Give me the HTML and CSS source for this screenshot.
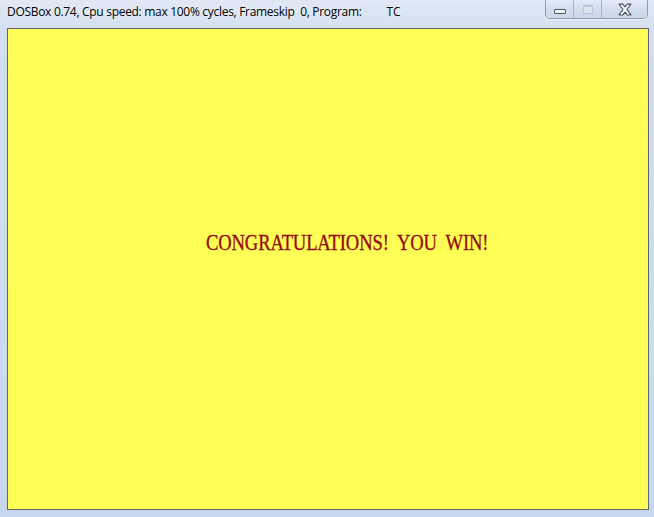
FILE: index.html
```html
<!DOCTYPE html>
<html>
<head>
<meta charset="utf-8">
<link rel="stylesheet" href="styles.css">
</head>
<body>
<div class="window">
  <div class="titlebar">
    <div class="title"><span class="t1">DOSBox 0.74, Cpu speed: max 100% cycles, Frameskip&nbsp; 0, Program:</span><span class="t2">TC</span></div>
    <div class="caption">
      <div class="btn min"><span class="min-bar"></span></div>
      <div class="btn max"><span class="max-box"></span></div>
      <div class="btn close">
        <svg width="14" height="12" viewBox="0 0 14 12"><path d="M1.5 1 L5 1 L7 3.6 L9 1 L12.5 1 L8.8 6 L12.5 11 L9 11 L7 8.4 L5 11 L1.5 11 L5.2 6 Z" fill="#f4f6fa" stroke="#4b5566" stroke-width="1" stroke-linejoin="round"/></svg>
      </div>
    </div>
  </div>
  <div class="client">
    <div class="msg"><span class="msg-text">CONGRATULATIONS!&nbsp; YOU&nbsp; WIN!</span></div>
  </div>
</div>
</body>
</html>
```
FILE: styles.css
```css
html, body { margin: 0; padding: 0; }
body { width: 654px; height: 517px; overflow: hidden; background: #d6e2f1; }
.window {
  width: 654px; height: 517px; box-sizing: border-box;
  padding: 0 5px 7px 7px;
  display: flex; flex-direction: column;
  background: linear-gradient(180deg, #dfe8f4 0%, #d3dff0 6%, #cddbee 60%, #c8d7ec 100%);
  position: relative;
}
.titlebar {
  height: 28px; display: flex; align-items: flex-start; position: relative;
}
.title {
  font-family: "Open Sans", "Noto Sans", sans-serif; font-size: 12px; color: #000;
  line-height: 14px; padding-top: 5px; white-space: nowrap; letter-spacing: -0.3px;
  text-shadow: 0 0 6px rgba(255,255,255,0.9);
}
.t2 { margin-left: 25px; }
.caption {
  position: absolute; right: 1px; top: 0; display: flex; height: 18px;
  border: 1px solid #8e9bb0; border-top: none; border-radius: 0 0 5px 5px;
  overflow: hidden; box-shadow: 0 1px 0 rgba(255,255,255,0.6);
}
.btn {
  height: 18px; display: flex; align-items: center; justify-content: center;
  background: linear-gradient(180deg, #e3ebf6 0%, #d2dded 50%, #c9d6ea 100%);
}
.min { width: 27px; border-right: 1px solid #a4b0c3; }
.max { width: 27px; border-right: 1px solid #a4b0c3; }
.close { width: 45px; }
.min-bar {
  width: 10px; height: 3px; margin-top: 4px; background: #f6f8fb; border: 1px solid #4b5566; border-radius: 1px;
}
.max-box {
  width: 8px; height: 6px; border: 1px solid #b9c4d6; border-top-width: 2px; background: #dbe4f1;
}
.close svg { display: block; margin-top: 1px; width: 16px; height: 13px; }
.client {
  flex: 1; background: #ffff55; border: 1px solid #5d6670;
  padding: 203px 0 0 198px; box-sizing: border-box;
}
.msg { height: 22px; }
.msg-text {
  display: inline-block; font-family: "Liberation Serif", serif; font-size: 23px;
  color: #960808; line-height: 22px; transform: scaleX(0.81); transform-origin: 0 0;
  white-space: nowrap; letter-spacing: -0.2px; -webkit-text-stroke: 0.3px #960808;
}
```
